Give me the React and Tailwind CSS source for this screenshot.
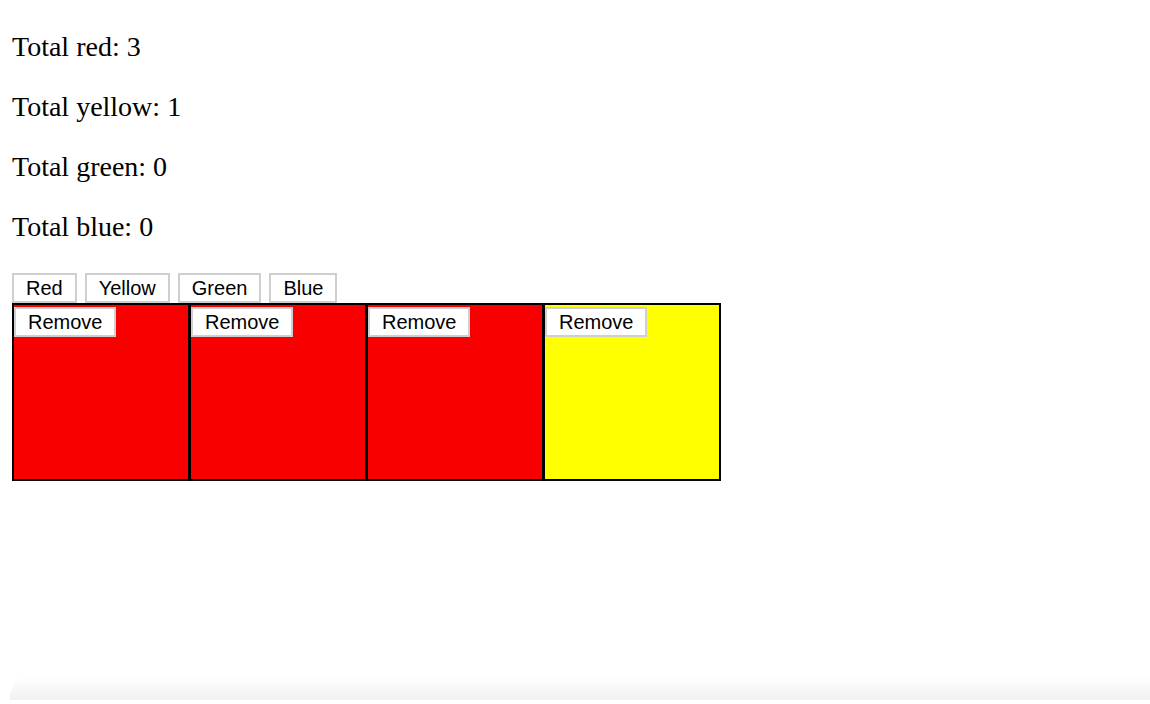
import { useState } from 'react';

const COLORS = {
  red: 'bg-[#f80000]',
  yellow: 'bg-[#ffff00]',
  green: 'bg-[#00c000]',
  blue: 'bg-[#0000ff]',
};

export default function App(){
  const [boxes, setBoxes] = useState(['red', 'red', 'red', 'yellow']);

  const count = c => boxes.filter(b => b === c).length;
  const add = c => setBoxes([...boxes, c]);
  const remove = i => setBoxes(boxes.filter((_, j) => j !== i));

  const btn = "h-[30px] px-[12px] bg-white border-2 border-[#cfcfcf] text-[20px] leading-none text-black font-['Liberation_Sans',Arial,sans-serif]";

  return <div className="relative w-[1150px] h-[704px] bg-white overflow-hidden pl-3 pt-[32px]">
    <div className="font-['Liberation_Serif','Times_New_Roman',serif] text-[28px] leading-[30px] text-black">
      <p className="mb-[30px]">Total red: {count('red')}</p>
      <p className="mb-[30px]">Total yellow: {count('yellow')}</p>
      <p className="mb-[30px]">Total green: {count('green')}</p>
      <p className="mb-[31px]">Total blue: {count('blue')}</p>
    </div>

    <div className="flex gap-2">
      <button onClick={()=>add('red')} className={btn}>Red</button>
      <button onClick={()=>add('yellow')} className={btn}>Yellow</button>
      <button onClick={()=>add('green')} className={btn}>Green</button>
      <button onClick={()=>add('blue')} className={btn}>Blue</button>
    </div>

    <div className="flex">
      {boxes.map((c, i) => (
        <div key={i} className={`w-[178px] h-[178px] border-2 border-black ${i > 0 ? '-ml-px' : ''} ${COLORS[c]}`}>
          <button onClick={()=>remove(i)} className={`${btn} mt-[2px]`}>Remove</button>
        </div>
      ))}
    </div>

    {/* soft shade along the bottom edge */}
    <div className="absolute left-[10px] right-0 bottom-[4px] h-[24px] rounded-tl-[20px] bg-gradient-to-b from-transparent to-[#f1f1f1]" />
  </div>;
}
